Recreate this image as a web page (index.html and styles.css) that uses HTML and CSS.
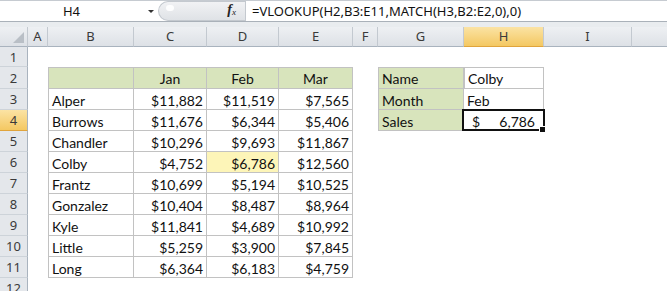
FILE: index.html
```html
<!DOCTYPE html>
<html>
<head>
<meta charset="utf-8">
<link rel="stylesheet" href="styles.css">
</head>
<body>
<div class="fbar">
  <div class="namebox"><span class="name">H4</span><span class="arrow"></span></div>
  <div class="fxbox"><span class="grip"></span><span class="fx"><i>f</i><sub>x</sub></span></div>
  <div class="formula">=VLOOKUP(H2,B3:E11,MATCH(H3,B2:E2,0),0)</div>
</div>
<div class="gap"></div>
<div class="sheet">
  <!-- header row -->
  <div class="ch corner"><span class="tri"></span></div>
  <div class="ch">A</div><div class="ch">B</div><div class="ch">C</div><div class="ch">D</div><div class="ch">E</div><div class="ch">F</div><div class="ch">G</div><div class="ch sel">H</div><div class="ch">I</div><div class="ch last"></div>

  <!-- row 1 -->
  <div class="rh">1</div>
  <div></div><div></div><div></div><div></div><div></div><div></div><div></div><div></div><div></div><div></div>

  <!-- row 2 -->
  <div class="rh">2</div>
  <div></div>
  <div class="t hd l tp"></div><div class="t hd c tp">Jan</div><div class="t hd c tp">Feb</div><div class="t hd c tp">Mar</div>
  <div></div>
  <div class="t hd l tp">Name</div><div class="t l tp">Colby</div>
  <div></div><div></div>

  <!-- row 3 -->
  <div class="rh">3</div>
  <div></div>
  <div class="t l">Alper</div><div class="t n">$11,882</div><div class="t n">$11,519</div><div class="t n">$7,565</div>
  <div></div>
  <div class="t hd l">Month</div><div class="t">Feb</div>
  <div></div><div></div>

  <!-- row 4 -->
  <div class="rh sel">4</div>
  <div></div>
  <div class="t l">Burrows</div><div class="t n">$11,676</div><div class="t n">$6,344</div><div class="t n">$5,406</div>
  <div></div>
  <div class="t hd l">Sales</div><div class="t acc active"><span>$</span><span>6,786</span><i class="handle"></i></div>
  <div></div><div></div>

  <!-- row 5 -->
  <div class="rh">5</div>
  <div></div>
  <div class="t l">Chandler</div><div class="t n">$10,296</div><div class="t n">$9,693</div><div class="t n">$11,867</div>
  <div></div><div></div><div></div><div></div><div></div>

  <!-- row 6 -->
  <div class="rh">6</div>
  <div></div>
  <div class="t l">Colby</div><div class="t n">$4,752</div><div class="t n hl">$6,786</div><div class="t n">$12,560</div>
  <div></div><div></div><div></div><div></div><div></div>

  <!-- row 7 -->
  <div class="rh">7</div>
  <div></div>
  <div class="t l">Frantz</div><div class="t n">$10,699</div><div class="t n">$5,194</div><div class="t n">$10,525</div>
  <div></div><div></div><div></div><div></div><div></div>

  <!-- row 8 -->
  <div class="rh">8</div>
  <div></div>
  <div class="t l">Gonzalez</div><div class="t n">$10,404</div><div class="t n">$8,487</div><div class="t n">$8,964</div>
  <div></div><div></div><div></div><div></div><div></div>

  <!-- row 9 -->
  <div class="rh">9</div>
  <div></div>
  <div class="t l">Kyle</div><div class="t n">$11,841</div><div class="t n">$4,689</div><div class="t n">$10,992</div>
  <div></div><div></div><div></div><div></div><div></div>

  <!-- row 10 -->
  <div class="rh">10</div>
  <div></div>
  <div class="t l">Little</div><div class="t n">$5,259</div><div class="t n">$3,900</div><div class="t n">$7,845</div>
  <div></div><div></div><div></div><div></div><div></div>

  <!-- row 11 -->
  <div class="rh">11</div>
  <div></div>
  <div class="t l">Long</div><div class="t n">$6,364</div><div class="t n">$6,183</div><div class="t n">$4,759</div>
  <div></div><div></div><div></div><div></div><div></div>

  <!-- row 12 -->
  <div class="rh top">12</div>
  <div></div><div></div><div></div><div></div><div></div><div></div><div></div><div></div><div></div><div></div>
</div>
</body>
</html>
```
FILE: styles.css
```css
html, body {
  margin: 0;
  padding: 0;
  background: #ffffff;
  overflow: hidden;
}
body {
  width: 667px;
  height: 291px;
}

/* ---------- formula bar ---------- */
.fbar {
  display: flex;
  height: 20px;
  border-top: 1px solid #c6cbd1;
  font-family: "Noto Sans", "Open Sans", sans-serif;
  font-size: 13px;
  color: #111;
  background: #fff;
}
.namebox {
  width: 158px;
  display: flex;
  align-items: center;
  position: relative;
}
.name {
  width: 143px;
  text-align: center;
  line-height: 20px;
}
.arrow {
  width: 0;
  height: 0;
  border-left: 3px solid transparent;
  border-right: 3px solid transparent;
  border-top: 3px solid #333;
  margin-left: 5px;
}
.fxbox {
  width: 87px;
  height: 20px;
  display: flex;
  align-items: center;
  justify-content: flex-end;
  box-sizing: border-box;
  background: linear-gradient(#f1f2f4, #dfe2e6);
  border: 1px solid #c4c9cf;
  border-right: none;
  border-radius: 10px 0 0 10px;
  position: relative;
}
.grip {
  position: absolute;
  left: 7px;
  top: 3px;
  width: 8px;
  height: 6px;
  border-radius: 4px;
  background: #ffffff;
  opacity: 0.9;
}
.fx {
  font-family: "Liberation Serif", "DejaVu Serif", serif;
  font-size: 14px;
  color: #222;
  margin-right: 9px;
  line-height: 18px;
}
.fx i { font-style: italic; font-weight: bold; }
.fx sub { font-size: 9px; font-style: italic; vertical-align: -1px; }
.formula {
  flex: 1;
  border-left: 1px solid #c4c9cf;
  padding-left: 6px;
  line-height: 20px;
  white-space: nowrap;
}
.gap {
  height: 5px;
  border-top: 1px solid #aab1b9;
  background: #e9ecef;
}

/* ---------- sheet ---------- */
.sheet {
  display: grid;
  grid-template-columns: 28px 20px 86px 73px 72px 74px 25px 86px 80px 88px 1fr;
  grid-template-rows: 20px 20px 22px repeat(9, 21px) 1fr;
  font-family: "Lato", "Open Sans", sans-serif;
  font-size: 14px;
  color: #111;
}
.sheet > div {
  box-sizing: border-box;
  min-width: 0;
  white-space: nowrap;
  overflow: visible;
}
.ch {
  background: linear-gradient(#eef0f3, #dde1e6);
  border-right: 1px solid #c3c9d0;
  border-bottom: 1px solid #a9b3be;
  font-family: "Noto Sans", "Open Sans", sans-serif;
  font-size: 13px;
  color: #3a3a3a;
  text-align: center;
  line-height: 19px;
}
.ch.last { border-right: none; }
.ch.corner {
  position: relative;
}
.tri {
  position: absolute;
  right: 3px;
  bottom: 3px;
  width: 0;
  height: 0;
  border-left: 11px solid transparent;
  border-bottom: 11px solid #b9bfc6;
}
.ch.sel {
  background: linear-gradient(#fbe3a4, #f4c862);
  border-bottom-color: #e0a43c;
  color: #3a3a3a;
}
.rh {
  background: #e4e7eb;
  border-right: 1px solid #a9b3be;
  border-bottom: 1px solid #cdd3d9;
  font-family: "Noto Sans", "Open Sans", sans-serif;
  font-size: 13px;
  color: #3a3a3a;
  text-align: center;
  display: flex;
  align-items: center;
  justify-content: center;
}
.rh.top {
  align-items: flex-start;
  line-height: 21px;
}
.rh.sel {
  background: linear-gradient(#fbe3a4, #f4c862);
  border-bottom-color: #e0a43c;
}

/* table cells */
.t {
  border-right: 1px solid #c2c2c2;
  border-bottom: 1px solid #c2c2c2;
  padding: 2px 3px 0 3px;
  line-height: 19px;
  position: relative;
}
.t.l { border-left: 1px solid #c2c2c2; }
.t.tp { border-top: 1px solid #c2c2c2; padding-top: 1px; }
.t.hd { background: #d8e4bc; }
.t.n { text-align: right; }
.t.c { text-align: center; }
.t.hl { background: #fdf5b8; }
.t.acc {
  display: flex;
  justify-content: space-between;
  padding: 2px 8px 0 8px;
}
.active::after {
  content: "";
  position: absolute;
  left: -2px;
  top: -1px;
  right: -2px;
  bottom: -1px;
  border: 2px solid #111;
}
.handle {
  position: absolute;
  right: -3px;
  bottom: -3px;
  width: 5px;
  height: 5px;
  background: #111;
  border: 1px solid #fff;
  z-index: 2;
}
```
